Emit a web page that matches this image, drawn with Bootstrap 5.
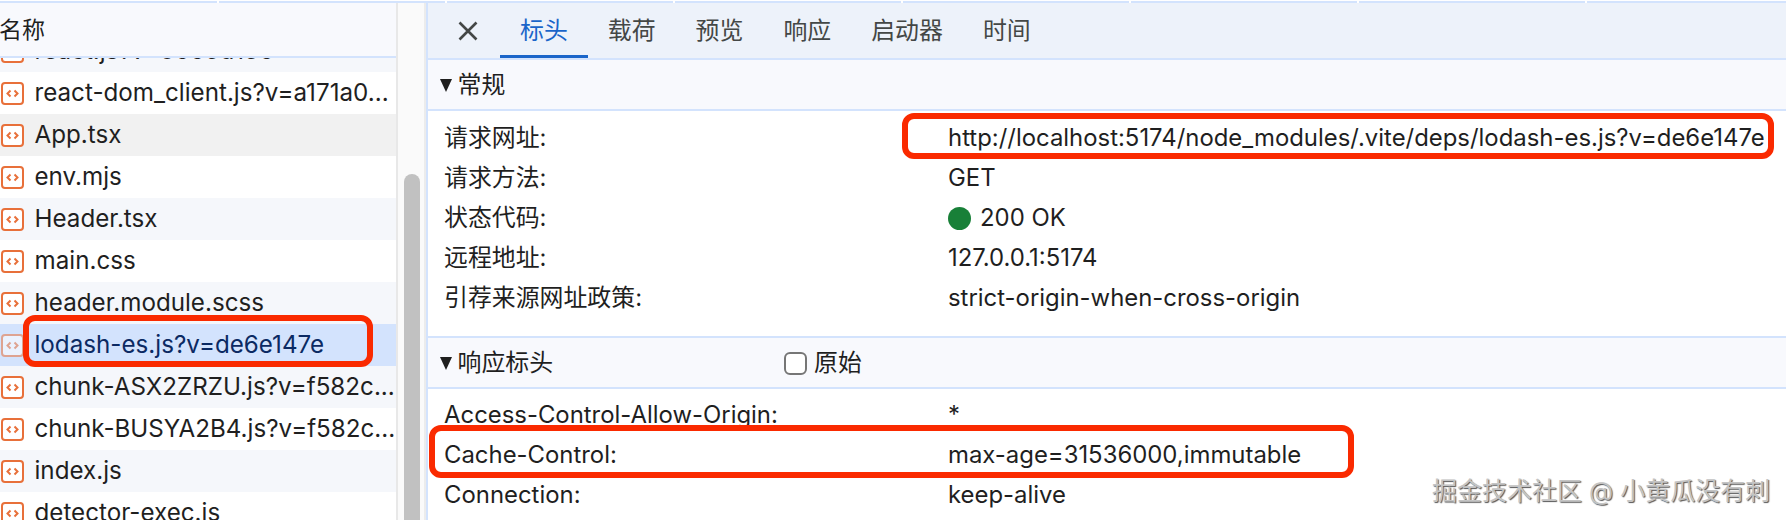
<!DOCTYPE html>
<html lang="zh-CN">
<head>
<meta charset="utf-8">
<title>Network</title>
<link href="https://cdn.jsdelivr.net/npm/bootstrap@5.3.0/dist/css/bootstrap.min.css" rel="stylesheet">
<style>
html,body{margin:0;height:520px;overflow:hidden;background:#fff}
body{font-family:"Inter","Noto Sans CJK SC",sans-serif;font-size:23.9px;color:#1f1f1f;line-height:1.2}
.topstrip{height:3px;background:linear-gradient(90deg,#d3e3fd 0 226px,#fff 226px 228px) -9px 100%/228px 2px repeat-x #fff}
.shell{height:517px;position:relative}
.listpane{width:396px;flex:none}
.listhead{height:55px;background:#f8f9fd;border-bottom:2px solid #d3e3fd;font-size:23px;padding-top:3px;text-indent:-1px}
.listrows{height:462px;overflow:hidden}
.netrow{height:42px;flex:none;padding-left:1px;gap:10.5px;background:#fff;white-space:nowrap;overflow:hidden;font-size:24.2px}
.netrow.stripe{background:#f5f7fb}
.netrow.hov{background:#f1f1f1}
.netrow.sel{background:#d3e3fd;color:#0b2a63}
.netrow.sel svg{opacity:.55}
.netrow.clip{height:14px;align-items:flex-end!important}
.netrow.clip>div{display:flex;gap:10.5px;align-items:center;height:42px;flex:none}
.fileicon{width:23px;height:23px;flex:none}
.scrolltrack{width:30px;flex:none;background:#fafafa;border-left:2px solid #e8e8e8;border-right:2px solid #ececec;padding:171px 4px 0 6px}
.scrollthumb{height:100%;background:#c1c1c1;border-radius:8px 8px 0 0}
.detail{flex:1 1 auto;min-width:0;border-left:2px solid #d3e3fd}
.tabbar{height:57px;background:#edf2fa;border-bottom:2px solid #d3e3fd}
.closex{width:72px;flex:none;padding-left:8px}
.tabitem{height:55px;padding:2px 20px 0;color:#444746;flex:none}
.tabitem.on{color:#1a65c9;box-shadow:inset 0 -3px 0 #1a65c9}
.sechead{height:51px;background:#f8f9fd;border-bottom:2px solid #d3e3fd;padding-left:11.5px;padding-top:2px}
.sechead.second{height:53px;border-top:2px solid #d3e3fd;margin-top:18px;padding-top:1px}
.tri{width:0;height:0;border-left:6.5px solid transparent;border-right:6.5px solid transparent;border-top:13px solid #1f1f1f;margin-right:6px;flex:none}
.secname{width:326.5px;flex:none}
.origin{width:23px;height:23px;margin:0 7px 0 0;border:2px solid #767676;border-radius:5px;background:#fff;flex:none}
.kvbox{padding:7px 0 0}
.kvbox.tight{padding-top:6px}
.kv{height:40px;white-space:nowrap}
.kv .kname{width:520px;padding-left:16px;flex:none}
.statusdot{width:23px;height:23px;border-radius:50%;background:#188038;margin-right:9px;flex:none}
.redbox{position:absolute;border:6px solid #fa2a00;border-radius:12px;pointer-events:none}
.rb1{left:902px;top:110px;width:872px;height:46px}
.rb2{left:429px;top:422px;width:925px;height:53px}
.rb3{left:23px;top:312px;width:350px;height:52px}
.mark-wm{position:absolute;left:1432px;top:473px;font-size:25px;color:#c4c4c4;white-space:nowrap;text-shadow:1px 1px 1px #555;line-height:30px}
</style>
</head>
<body>
<div class="topstrip"></div>
<div class="shell d-flex">
  <div class="listpane d-flex flex-column">
    <div class="listhead d-flex align-items-center">名称</div>
    <div class="listrows d-flex flex-column" id="rows"></div>
  </div>
  <div class="scrolltrack"><div class="scrollthumb"></div></div>
  <div class="detail">
    <div class="tabbar d-flex align-items-center">
      <div class="closex d-flex justify-content-center"><svg width="20" height="20" viewBox="0 0 20 20"><path d="M1.5 1.5 18.5 18.5M18.5 1.5 1.5 18.5" stroke="#444746" stroke-width="2.6" fill="none"/></svg></div>
      <div class="tabitem on d-flex align-items-center">标头</div>
      <div class="tabitem d-flex align-items-center">载荷</div>
      <div class="tabitem d-flex align-items-center">预览</div>
      <div class="tabitem d-flex align-items-center">响应</div>
      <div class="tabitem d-flex align-items-center">启动器</div>
      <div class="tabitem d-flex align-items-center">时间</div>
    </div>
    <div class="sechead d-flex align-items-center"><span class="tri"></span>常规</div>
    <div class="kvbox">
      <div class="kv d-flex align-items-center"><div class="kname">请求网址:</div><div>http://localhost:5174/node_modules/.vite/deps/lodash-es.js?v=de6e147e</div></div>
      <div class="kv d-flex align-items-center"><div class="kname">请求方法:</div><div>GET</div></div>
      <div class="kv d-flex align-items-center"><div class="kname">状态代码:</div><span class="statusdot"></span><div>200 OK</div></div>
      <div class="kv d-flex align-items-center"><div class="kname">远程地址:</div><div>127.0.0.1:5174</div></div>
      <div class="kv d-flex align-items-center"><div class="kname">引荐来源网址政策:</div><div>strict-origin-when-cross-origin</div></div>
    </div>
    <div class="sechead second d-flex align-items-center"><span class="tri"></span><span class="secname">响应标头</span><input type="checkbox" class="origin form-check-input"><span>原始</span></div>
    <div class="kvbox tight">
      <div class="kv d-flex align-items-center"><div class="kname">Access-Control-Allow-Origin:</div><div>*</div></div>
      <div class="kv d-flex align-items-center"><div class="kname">Cache-Control:</div><div>max-age=31536000,immutable</div></div>
      <div class="kv d-flex align-items-center"><div class="kname">Connection:</div><div>keep-alive</div></div>
    </div>
  </div>
  <div class="redbox rb1"></div>
  <div class="redbox rb2"></div>
  <div class="redbox rb3"></div>
  <div class="mark-wm">掘金技术社区 @ 小黄瓜没有刺</div>
</div>
<script>
var icon='<svg class="fileicon" viewBox="0 0 23 23"><rect x="1" y="1" width="21" height="21" rx="3" fill="#fff" stroke="#e8703a" stroke-width="2"/><path d="M9.5 8.5 6.5 11.5 9.5 14.5M13.5 8.5 16.5 11.5 13.5 14.5" fill="none" stroke="#e8703a" stroke-width="2"/></svg>';
var data=[["react.js?v=0665d136","stripe clip"],["react-dom_client.js?v=a171a0...",""],["App.tsx","hov"],["env.mjs",""],["Header.tsx","stripe"],["main.css",""],["header.module.scss","stripe"],["lodash-es.js?v=de6e147e","sel"],["chunk-ASX2ZRZU.js?v=f582c...","stripe"],["chunk-BUSYA2B4.js?v=f582c...",""],["index.js","stripe"],["detector-exec.js",""]];
document.getElementById('rows').innerHTML=data.map(function(d){
 var inner=icon+'<span>'+d[0]+'</span>';
 if(d[1].indexOf('clip')>=0) inner='<div>'+inner+'</div>';
 return '<div class="netrow d-flex align-items-center '+d[1]+'">'+inner+'</div>';
}).join('');
</script>
<script src="https://cdn.jsdelivr.net/npm/bootstrap@5.3.0/dist/js/bootstrap.bundle.min.js"></script>
</body>
</html>
